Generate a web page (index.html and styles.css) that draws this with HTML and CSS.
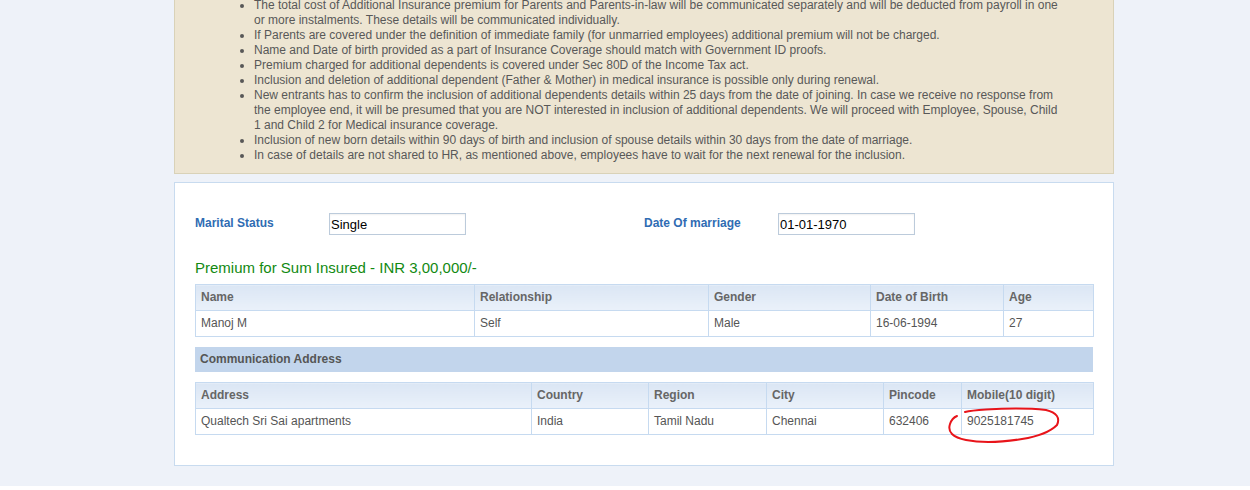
FILE: index.html
```html
<!DOCTYPE html>
<html>
<head>
<meta charset="utf-8">
<link rel="stylesheet" href="styles.css">
</head>
<body>
<div class="page">
  <div class="wrap">
    <div class="notice">
      <ul>
        <li>The total cost of Additional Insurance premium for Parents and Parents-in-law will be communicated separately and will be deducted from payroll in one or more instalments. These details will be communicated individually.</li>
        <li>If Parents are covered under the definition of immediate family (for unmarried employees) additional premium will not be charged.</li>
        <li>Name and Date of birth provided as a part of Insurance Coverage should match with Government ID proofs.</li>
        <li>Premium charged for additional dependents is covered under Sec 80D of the Income Tax act.</li>
        <li>Inclusion and deletion of additional dependent (Father &amp; Mother) in medical insurance is possible only during renewal.</li>
        <li>New entrants has to confirm the inclusion of additional dependents details within 25 days from the date of joining. In case we receive no response from the employee end, it will be presumed that you are NOT interested in inclusion of additional dependents. We will proceed with Employee, Spouse, Child 1 and Child 2 for Medical insurance coverage.</li>
        <li>Inclusion of new born details within 90 days of birth and inclusion of spouse details within 30 days from the date of marriage.</li>
        <li>In case of details are not shared to HR, as mentioned above, employees have to wait for the next renewal for the inclusion.</li>
      </ul>
    </div>

    <div class="panel">
      <div class="form-row">
        <label class="lbl">Marital Status</label>
        <input class="field" type="text" value="Single">
        <label class="lbl">Date Of marriage</label>
        <input class="field" type="text" value="01-01-1970">
      </div>

      <h3 class="premium">Premium for Sum Insured - INR 3,00,000/-</h3>

      <table class="grid t1">
        <thead>
          <tr><th class="c-name">Name</th><th class="c-rel">Relationship</th><th class="c-gen">Gender</th><th class="c-dob">Date of Birth</th><th class="c-age">Age</th></tr>
        </thead>
        <tbody>
          <tr><td>Manoj M</td><td>Self</td><td>Male</td><td>16-06-1994</td><td>27</td></tr>
        </tbody>
      </table>

      <div class="section-bar">Communication Address</div>

      <table class="grid t2">
        <thead>
          <tr><th class="c-addr">Address</th><th class="c-cty">Country</th><th class="c-reg">Region</th><th class="c-city">City</th><th class="c-pin">Pincode</th><th class="c-mob">Mobile(10 digit)</th></tr>
        </thead>
        <tbody>
          <tr><td>Qualtech Sri Sai apartments</td><td>India</td><td>Tamil Nadu</td><td>Chennai</td><td>632406</td><td class="mob">9025181745<svg class="circle" viewBox="0 0 116 42" width="116" height="42"><path d="M11 10 Q6 12 4 18 Q0 30 20 34 Q42 38.5 76 33 Q101 29 111 19 Q116 8 100 4 Q76 1.5 40 3.5 Q25 4.5 19 6" fill="none" stroke="#e8141a" stroke-width="2" stroke-linecap="round"/></svg></td></tr>
        </tbody>
      </table>
    </div>
  </div>
</div>
</body>
</html>
```

FILE: styles.css
```css
html, body {
  margin: 0;
  padding: 0;
  background: #ffffff;
}
body {
  font-family: "Liberation Sans", Arial, sans-serif;
  font-size: 12px;
  color: #555555;
}
.page {
  background: #eef2f9;
  height: 486px;
  overflow: hidden;
}
.wrap {
  width: 940px;
  margin-left: 174px;
}
.notice {
  margin-top: -13px;
  background: #ede5d2;
  border: 1px solid #d9d2b8;
  padding: 10px 51px 10px 39px;
}
.notice ul {
  margin: 0;
  padding-left: 40px;
  line-height: 15px;
  color: #585858;
}
.notice li {
  margin: 0;
}
.panel {
  margin-top: 8px;
  background: #ffffff;
  border: 1px solid #c8dbef;
  height: 284px;
  box-sizing: border-box;
  padding: 30px 20px 0 20px;
}
.form-row {
  display: grid;
  grid-template-columns: 134px 137px 178px 134px 137px;
  align-items: start;
}
.form-row .field:nth-of-type(1) {
  grid-column: 2;
}
.form-row .lbl:nth-of-type(2) {
  grid-column: 4;
}
.lbl {
  font-weight: bold;
  color: #2f6cb3;
  font-size: 12px;
  line-height: 15px;
  padding-top: 3px;
}
.field {
  box-sizing: border-box;
  width: 137px;
  height: 22px;
  margin: 0;
  border: 1px solid #bccbdb;
  padding: 0 1px;
  font-family: "Liberation Sans", Arial, sans-serif;
  font-size: 13px;
  color: #000000;
  background: #ffffff;
  box-shadow: inset 0 1px 2px rgba(0,0,0,0.06);
  outline: none;
}
.premium {
  margin: 24px 0 7px 0;
  font-weight: normal;
  font-size: 15px;
  line-height: 18px;
  color: #128a12;
}
.grid {
  width: 898px;
  border-collapse: collapse;
  table-layout: fixed;
}
.grid th, .grid td {
  box-sizing: border-box;
  border: 1px solid #c6daf0;
  padding: 5px 5px;
  line-height: 15px;
  text-align: left;
  font-size: 12px;
}
.grid th {
  font-weight: bold;
  color: #666666;
  background: linear-gradient(to bottom, #dbe6f4, #eaf1fa);
}
.grid td {
  color: #555555;
  background: #ffffff;
}
.c-name { width: 279px; }
.c-rel { width: 234px; }
.c-gen { width: 162px; }
.c-dob { width: 133px; }
.c-age { width: 90px; }
.c-addr { width: 336px; }
.c-cty { width: 117px; }
.c-reg { width: 118px; }
.c-city { width: 117px; }
.c-pin { width: 78px; }
.c-mob { width: 132px; }
.section-bar {
  margin: 10px 0 10px 0;
  width: 898px;
  height: 25px;
  box-sizing: border-box;
  background: #c2d5ec;
  padding: 5px 5px;
  line-height: 15px;
  font-weight: bold;
  color: #555555;
}
.mob {
  position: relative;
}
.circle {
  position: absolute;
  left: -16px;
  top: -3px;
  overflow: visible;
}
```
